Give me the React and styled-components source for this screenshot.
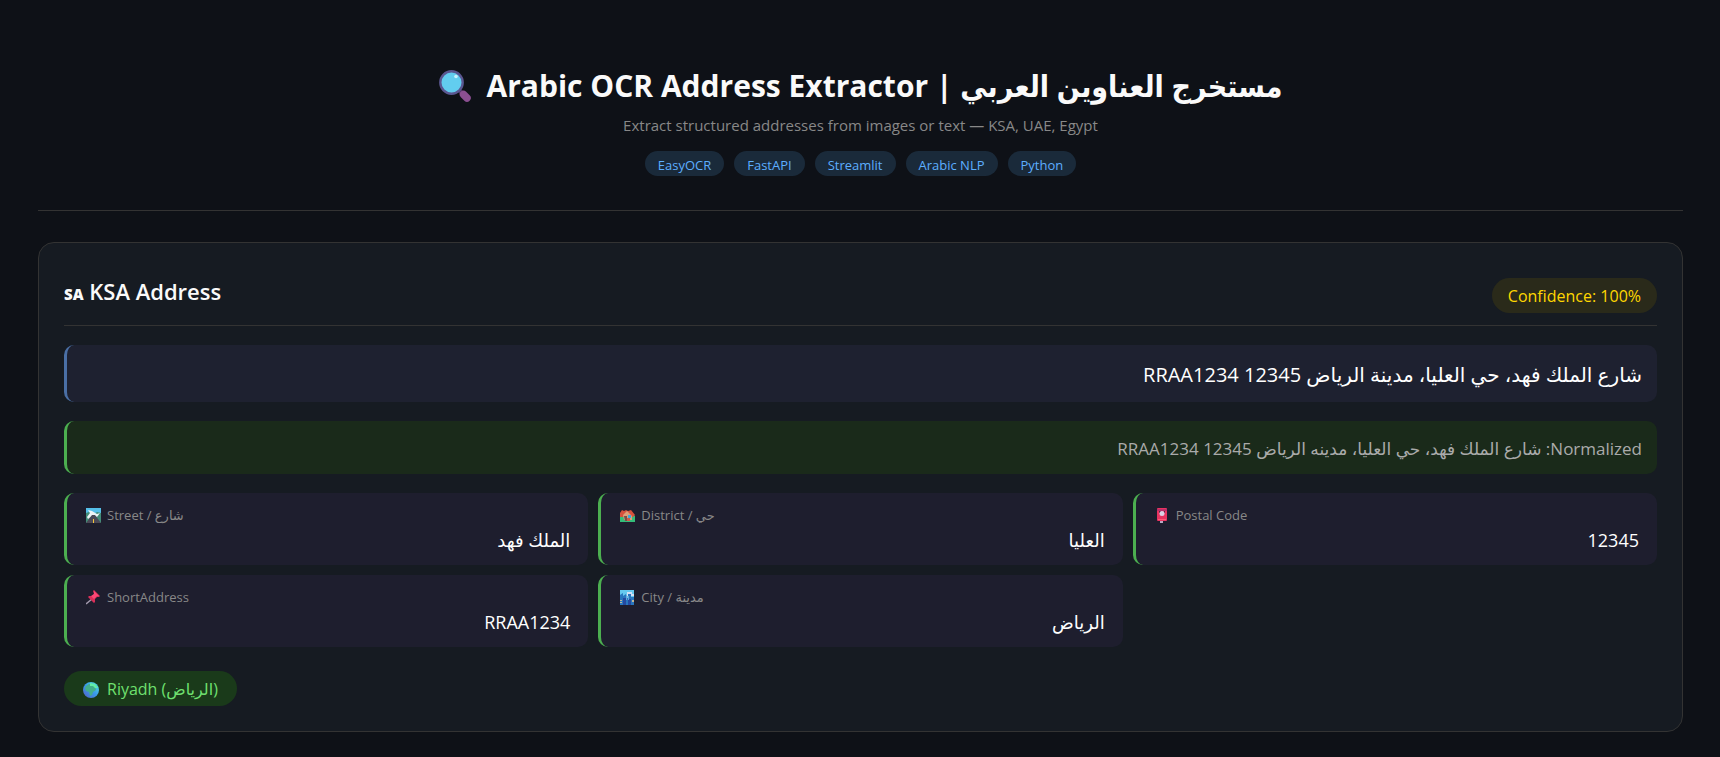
import styled, { createGlobalStyle } from "styled-components";

const GlobalStyle = createGlobalStyle`
    * {
        box-sizing: border-box;
    }
    body {
        margin: 0;
        background-color: #0e1117;
        color: #fafafa;
        font-family: "Segoe UI", "Open Sans", "DejaVu Sans", sans-serif;
    }
`

const Page = styled.main`
    padding: 63px 37px 25px 38px;
`

const Header = styled.header`
    display: flex;
    flex-direction: column;
    align-items: center;
    padding-bottom: 34px;
    border-bottom: 1px solid #333;
    margin-bottom: 31px;
`

const Title = styled.h1`
    display: flex;
    align-items: center;
    gap: 16px;
    margin: 0;
    font-family: "Segoe UI", "Open Sans", "DejaVu Sans Condensed", "DejaVu Sans", sans-serif;
    font-size: 30px;
    line-height: 46px;
    font-weight: bold;
`

const Subtitle = styled.p`
    margin: 4px 0 14px;
    color: #888;
    font-size: 15px;
    line-height: 24px;
`

const BadgeList = styled.ul`
    display: flex;
    flex-wrap: wrap;
    justify-content: center;
    gap: 10px;
    margin: 0;
    padding: 0;
    list-style: none;
`

const Badge = styled.li`
    padding: 4px 13px 1px;
    border-radius: 20px;
    background-color: #1a2a3a;
    color: #5daeff;
    font-size: 13px;
    line-height: 20px;
`

const Card = styled.section`
    padding: 35px 25px 25px;
    border: 1px solid #333;
    border-radius: 16px;
    background-color: #161b22;
`

const CardHeader = styled.div`
    display: flex;
    align-items: flex-start;
    justify-content: space-between;
    padding-bottom: 12px;
    border-bottom: 1px solid #333;
    margin-bottom: 19px;
    > h2 {
        margin: 0;
        font-size: 22px;
        line-height: 26px;
        font-weight: 600;
    }
    > h2 > small {
        font-size: 15px;
        font-weight: 800;
    }
`

const Pill = styled.span`
    display: inline-flex;
    align-items: center;
    gap: 8px;
    padding: 6px ${({ $tone }) => ($tone === "gold" ? 16 : 19)}px 4px;
    border-radius: 20px;
    background-color: ${({ $tone }) => ($tone === "gold" ? "#2a2a1a" : "#1a3a1a")};
    color: ${({ $tone }) => ($tone === "gold" ? "#ffd700" : "#6fe06f")};
    font-size: 16px;
    line-height: 25px;
`

const AddressLine = styled.p`
    margin: 0 0 19px;
    padding: 13px 15px 11px;
    border-left: 3px solid ${({ $muted }) => ($muted ? "#4caf50" : "#4a6fa5")};
    border-radius: 10px;
    background-color: ${({ $muted }) => ($muted ? "#1a2a1a" : "#1e2130")};
    color: ${({ $muted }) => ($muted ? "#aaa" : "#fff")};
    font-size: ${({ $muted }) => ($muted ? 17 : 20)}px;
    line-height: ${({ $muted }) => ($muted ? 29 : 33)}px;
`

const Fields = styled.dl`
    display: grid;
    grid-template-columns: repeat(3, 1fr);
    gap: 10px;
    margin: 0 0 24px;
`

const Field = styled.div`
    padding: 12px 18px 12px 19px;
    border-left: 3px solid #4caf50;
    border-radius: 10px;
    background-color: #1e1e2e;
    > dt {
        display: flex;
        align-items: center;
        gap: 6px;
        color: #888;
        font-size: 13px;
        line-height: 20px;
    }
    > dd {
        margin: 2px 0 0;
        color: #fff;
        font-size: 18px;
        line-height: 26px;
        text-align: right;
    }
`

const SearchIcon = () => (
    <svg width="32" height="32" viewBox="0 0 32 32" aria-hidden="true">
        <path d="M21 21l3 3" stroke="#533566" strokeWidth="4" strokeLinecap="round" />
        <path d="M24.500 24.500l3.500 3.500" stroke="#8b4f91" strokeWidth="7.500" strokeLinecap="round" />
        <circle cx="12.500" cy="12.500" r="11.200" fill="#62cdef" stroke="#5a5791" strokeWidth="2.400" />
        <circle cx="17" cy="6.500" r="1.800" fill="#c9f1fc" />
    </svg>
)

const RoadIcon = () => (
    <svg width="15" height="15" viewBox="0 0 15 15" aria-hidden="true">
        <rect width="15" height="15" fill="#55bfe9" />
        <path d="M0 5l3-1 4 3 4-3 4 1v10H0z" fill="#438c78" />
        <path d="M2 2l4 1 5 3 3-1-3 4-4-2-5 4-1-2 3-4z" fill="#edf3f5" />
        <path d="M6 7h3l6 8H0z" fill="#4b4856" />
        <path d="M7 11h1v4H7z" fill="#f5c63c" />
    </svg>
)

const HousesIcon = () => (
    <svg width="15" height="15" viewBox="0 0 15 15" aria-hidden="true">
        <path d="M0 8l3-2h9l3 2v6H0z" fill="#35bd79" />
        <path d="M0 5l2-3 2 1 2-1 2 1 3-1 4 5-2 2H0z" fill="#d6523d" />
        <path d="M3 7l4-4 5 5v4H4z" fill="#dda078" />
        <path d="M4 8h3v5H5z" fill="#77504b" />
        <path d="M8 7h3v3H8z" fill="#42a6d9" />
        <path d="M7 10h3v3H7z" fill="#d05a48" />
    </svg>
)

const PostboxIcon = () => (
    <svg width="15" height="15" viewBox="0 0 15 15" aria-hidden="true">
        <path d="M5 12h3v3H5z" fill="#b8a9c4" />
        <rect x="2" width="10" height="13" rx="1" fill="#e93360" />
        <path d="M2 1h10v2H2z" fill="#bd2e68" />
        <path d="M4 3h2v2H4zM9 3h1v2H9z" fill="#572a48" />
        <circle cx="7" cy="5.500" r="2.500" fill="#ddd2e5" />
        <path d="M3 11h8v1H3z" fill="#ff5c76" />
    </svg>
)

const PinIcon = () => (
    <svg width="15" height="15" viewBox="0 0 15 15" aria-hidden="true">
        <path d="M6 9l-6 5" stroke="#a49aae" strokeWidth="1.400" />
        <path d="M8 0l6 6-1 1-2 0-2 2 0 3-1 1-6-6 1-1h3l2-2-1-3z" fill="#d92f59" />
        <path d="M8 1l5 5-2 0-3 3-3-3 3-2z" fill="#fb4774" />
    </svg>
)

const CityIcon = () => (
    <svg width="15" height="15" viewBox="0 0 15 15" aria-hidden="true">
        <rect width="14" height="15" fill="#65c9ef" />
        <path d="M7 2h5v2h2v2H7z" fill="#d2dff4" />
        <path d="M0 5l3-2v3l3-2v4h2V4h3v3h3v8H0z" fill="#2976be" />
        <path d="M3 8h3v7H3zM8 9h3v6H8z" fill="#2549a0" />
        <path d="M6 5h1v5H6zM8 6h1v4H8z" fill="#65a7dd" />
        <path d="M0 10h2v1H0zM0 12h2v1H0zM12 10h2v2h-2z" fill="#bdb798" />
    </svg>
)

const GlobeIcon = () => (
    <svg width="16" height="16" viewBox="0 0 16 16" aria-hidden="true">
        <defs>
            <linearGradient id="ocean" x1="1" y1="0" x2="0" y2="1">
                <stop offset="0" stopColor="#56e7dd" />
                <stop offset=".5" stopColor="#3998eb" />
                <stop offset="1" stopColor="#565fc3" />
            </linearGradient>
        </defs>
        <circle cx="8" cy="8" r="8" fill="url(#ocean)" />
        <path d="M3 4l3-2 4 1 2 2 1 3-3 2-1 3-2 1-1-4-3-1-1-3z" fill="#43ae8c" />
        <path d="M7 1l5 1 3 4-3 0-2-2-3 0z" fill="#63eda7" />
    </svg>
)

const badges = ["EasyOCR", "FastAPI", "Streamlit", "Arabic NLP", "Python"]

const fields = [
    { label: "Street / شارع", value: "الملك فهد", Icon: RoadIcon },
    { label: "District / حي", value: "العليا", Icon: HousesIcon },
    { label: "Postal Code", value: "12345", Icon: PostboxIcon },
    { label: "ShortAddress", value: "RRAA1234", Icon: PinIcon },
    { label: "City / مدينة", value: "الرياض", Icon: CityIcon },
]

const App = () => {
    return <>
        <GlobalStyle />
        <Page>
            <Header>
                <Title>
                    <SearchIcon />
                    <span>Arabic OCR Address Extractor | مستخرج العناوين العربي</span>
                </Title>
                <Subtitle>Extract structured addresses from images or text — KSA, UAE, Egypt</Subtitle>
                <BadgeList>
                    {badges.map((badge) => <Badge key={badge}>{badge}</Badge>)}
                </BadgeList>
            </Header>
            <Card>
                <CardHeader>
                    <h2><small>SA</small> KSA Address</h2>
                    <Pill $tone="gold">Confidence: 100%</Pill>
                </CardHeader>
                <AddressLine dir="rtl" lang="ar">
                    شارع الملك فهد، حي العليا، مدينة الرياض 12345 RRAA1234
                </AddressLine>
                <AddressLine dir="rtl" lang="ar" $muted>
                    Normalized: شارع الملك فهد، حي العليا، مدينه الرياض 12345 RRAA1234
                </AddressLine>
                <Fields>
                    {fields.map(({ label, value, Icon }) => (
                        <Field key={label}>
                            <dt><Icon /><span>{label}</span></dt>
                            <dd>{value}</dd>
                        </Field>
                    ))}
                </Fields>
                <Pill $tone="green"><GlobeIcon /><span>Riyadh (الرياض)</span></Pill>
            </Card>
        </Page>
    </>;
};

export default App;
